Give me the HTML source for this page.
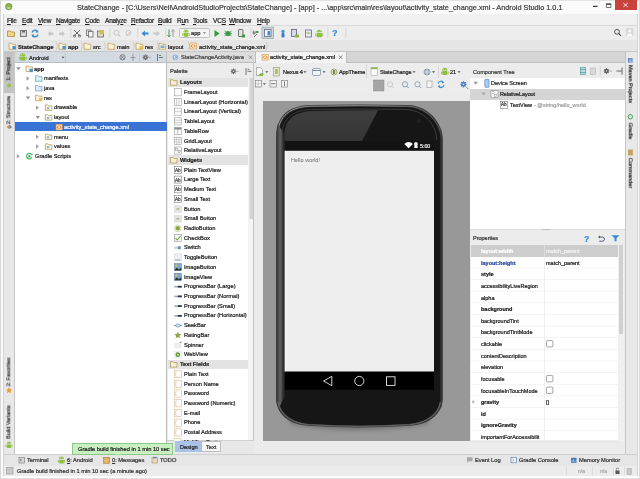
<!DOCTYPE html><html><head><meta charset="utf-8"><style>
html,body{margin:0;padding:0;width:640px;height:479px;overflow:hidden;background:#fff}
body{filter:blur(0.25px)}
body>div{position:absolute}
.t{white-space:nowrap;font-family:"Liberation Sans",sans-serif;-webkit-text-stroke-width:0.22px;will-change:transform}
svg{position:absolute;left:0;top:0}
u{text-decoration-thickness:0.5px;text-underline-offset:0.6px}
</style></head><body>
<div style="left:0px;top:0px;width:640px;height:479px;background:#ffffff"></div>
<div style="left:0px;top:0px;width:640px;height:14px;background:#fbfbfb"></div>
<div style="left:0px;top:0px;width:640px;height:0.8px;background:#e2e2e2"></div>
<div style="left:0px;top:0px;width:1.2px;height:479px;background:#dcdcdc"></div>
<div style="left:615px;top:0px;width:21.5px;height:9.8px;background:#c9423c"></div>
<div style="left:0px;top:14px;width:640px;height:12px;background:#f0f0f0"></div>
<div style="left:0px;top:25px;width:640px;height:1px;background:#d9d9d9"></div>
<div style="left:0px;top:26px;width:640px;height:14px;background:#ededed"></div>
<div style="left:0px;top:39.5px;width:640px;height:1px;background:#d0d0d0"></div>
<div style="left:0px;top:40px;width:640px;height:11.5px;background:#e5e5e5"></div>
<div style="left:0px;top:51px;width:640px;height:1px;background:#c6c6c6"></div>
<div style="left:0px;top:52px;width:15px;height:403px;background:#e8e8e8"></div>
<div style="left:0px;top:52px;width:3px;height:427px;background:#f6f6f6"></div>
<div style="left:14.2px;top:52px;width:0.8px;height:403px;background:#c6c6c6"></div>
<div style="left:4px;top:51.5px;width:10px;height:41px;background:#c4c4c4"></div>
<div style="left:15px;top:52px;width:152px;height:10.5px;background:#d4dae2"></div>
<div style="left:15px;top:62.3px;width:152px;height:0.8px;background:#bcc0c6"></div>
<div style="left:15px;top:63px;width:151.5px;height:392px;background:#ffffff"></div>
<div style="left:166.3px;top:52px;width:1px;height:403px;background:#bdbdbd"></div>
<div style="left:15px;top:121.8px;width:151.5px;height:9.4px;background:#3a73d6"></div>
<div style="left:167.3px;top:52px;width:457.5px;height:10.5px;background:#d5d5d5"></div>
<div style="left:167.3px;top:62.3px;width:457.5px;height:0.8px;background:#bdbdbd"></div>
<div style="left:167.3px;top:52px;width:88px;height:10.3px;background:#dcdcdc"></div>
<div style="left:255px;top:52px;width:0.8px;height:10.5px;background:#bdbdbd"></div>
<div style="left:256px;top:51.8px;width:89.5px;height:11.2px;background:#f3f3f3"></div>
<div style="left:345.5px;top:52px;width:0.8px;height:10.5px;background:#bdbdbd"></div>
<div style="left:167.3px;top:63px;width:86px;height:392px;background:#ececec"></div>
<div style="left:168.3px;top:78px;width:80px;height:362px;background:#ffffff"></div>
<div style="left:248.3px;top:78px;width:4.7px;height:362px;background:#f4f4f4"></div>
<div style="left:248.8px;top:78px;width:4px;height:140.6px;background:#d3d3d3;border-left:0.6px solid #e4e4e4;box-sizing:border-box"></div>
<div style="left:252.8px;top:63px;width:1px;height:377.5px;background:#c4c4c4"></div>
<div style="left:168.3px;top:77.7px;width:80px;height:9.4px;background:#e3e3e3"></div>
<div style="left:168.3px;top:155.45999999999998px;width:80px;height:9.4px;background:#e3e3e3"></div>
<div style="left:168.3px;top:359.58px;width:80px;height:9.4px;background:#e3e3e3"></div>
<div style="left:167.3px;top:440.5px;width:302.2px;height:14px;background:#e8e8e8"></div>
<div style="left:167.3px;top:440.3px;width:95.2px;height:0.8px;background:#cfcfcf"></div>
<div style="left:175px;top:440.8px;width:26.3px;height:11.7px;background:#a9c2e6"></div>
<div style="left:201.3px;top:440.8px;width:20px;height:11.7px;background:#f8f8f8;border:0.8px solid #bdbdbd;box-sizing:border-box"></div>
<div style="left:253.8px;top:63px;width:216px;height:30.7px;background:#ececec"></div>
<div style="left:253.8px;top:93.5px;width:216px;height:0.8px;background:#d2d2d2"></div>
<div style="left:253.8px;top:94.3px;width:216px;height:360.7px;background:#ebebeb"></div>
<div style="left:262.5px;top:100.7px;width:207px;height:340.1px;background:#989898"></div>
<div style="left:469.5px;top:63px;width:155.5px;height:165.5px;background:#ffffff"></div>
<div style="left:469.5px;top:63px;width:155.5px;height:15px;background:#ececec"></div>
<div style="left:469.5px;top:88.6px;width:155.5px;height:11px;background:#d5d5d5"></div>
<div style="left:469.5px;top:228.5px;width:155.5px;height:226.5px;background:#ececec"></div>
<div style="left:469.5px;top:228.5px;width:155.5px;height:0.8px;background:#dcdcdc"></div>
<div style="left:471px;top:244.8px;width:147.3px;height:196.2px;background:#ffffff"></div>
<div style="left:618.3px;top:244.8px;width:5.5px;height:196.2px;background:#f0f0f0"></div>
<div style="left:619.3px;top:245px;width:4.2px;height:88.5px;background:#d0d0d0"></div>
<div style="left:471px;top:244.885px;width:147.3px;height:11.63px;background:#cdcdcd"></div>
<div style="left:625px;top:52px;width:15px;height:403px;background:#e8e8e8"></div>
<div style="left:624.5px;top:52px;width:0.8px;height:403px;background:#c6c6c6"></div>
<div style="left:637px;top:52px;width:3px;height:427px;background:#f6f6f6"></div>
<div style="left:0px;top:454px;width:640px;height:1px;background:#cfcfcf"></div>
<div style="left:0px;top:455px;width:640px;height:11px;background:#e6e6e6"></div>
<div style="left:0px;top:465.7px;width:640px;height:0.6px;background:#d4d4d4"></div>
<div style="left:0px;top:466.3px;width:640px;height:9.7px;background:#ececec"></div>
<div style="left:0px;top:476px;width:640px;height:3px;background:#fcfcfc"></div>
<div style="left:72px;top:443px;width:101px;height:11.8px;background:#c8f0c0;border:0.7px solid #8cc888;box-sizing:border-box"></div>
<div style="left:637px;top:14px;width:3px;height:465px;background:#f9f9f9"></div>
<div style="left:636.6px;top:14px;width:0.6px;height:462px;background:#d4d4d4"></div>
<div style="left:639px;top:0px;width:1px;height:479px;background:#dcdcdc"></div>
<div style="left:0px;top:14px;width:3px;height:465px;background:#f9f9f9"></div>
<div style="left:2.8px;top:14px;width:0.6px;height:462px;background:#d4d4d4"></div>
<div style="left:0px;top:0px;width:1.2px;height:479px;background:#d8d8d8"></div>
<div style="left:0px;top:478px;width:640px;height:1px;background:#e0e0e0"></div>
<svg width="640" height="479" viewBox="0 0 640 479" style="position:absolute;left:0;top:0">
<circle cx="8.75" cy="6.6" r="3.2" fill="#8db34e" stroke="#6f8f3c" stroke-width="0.8"/><path d="M6.5 7.6 a2.4 1.6 0 0 0 4.5 0" fill="#e4efc8"/>
<rect x="593" y="5.8" width="4.5" height="1.2" fill="#333"/>
<rect x="606.3" y="3.8" width="4.6" height="3.8" fill="none" stroke="#444" stroke-width="0.7"/><rect x="606.3" y="3.8" width="4.6" height="1.1" fill="#444"/>
<path d="M623.3 3 L627.8 7 M627.8 3 L623.3 7" stroke="#fbe0e0" stroke-width="1"/>
<path d="M7.5 31 h2.5 l1 1 h3.5 v4.5 h-7z" fill="#f2d68c" stroke="#b08a3c" stroke-width="0.8"/>
<rect x="20.5" y="30.5" width="6" height="6" fill="#d8d8d8" stroke="#6d6d6d" stroke-width="0.9"/><rect x="22" y="30.5" width="3" height="2" fill="#6d6d6d"/>
<path d="M32 32.5 a3.2 3.2 0 0 1 5.8 -0.8 M38 34.5 a3.2 3.2 0 0 1 -5.8 0.8" fill="none" stroke="#3f8bd0" stroke-width="1.5"/><path d="M36.5 29.8 l2.2 2.4 l-2.8 0.5z M33.5 37.2 l-2.2 -2.4 l2.8 -0.5z" fill="#3f8bd0"/>
<path d="M47.5 33.5 l3 -2.5 v1.5 h3 v2.5 h-3 v1.5z" fill="#c9c9c9"/>
<path d="M65 33.5 l-3 -2.5 v1.5 h-3 v2.5 h3 v1.5z" fill="#c9c9c9"/>
<rect x="70.5" y="28" width="0.8" height="10" fill="#cfcfcf"/>
<rect x="109.5" y="28" width="0.8" height="10" fill="#cfcfcf"/>
<rect x="137.5" y="28" width="0.8" height="10" fill="#cfcfcf"/>
<rect x="165.5" y="28" width="0.8" height="10" fill="#cfcfcf"/>
<rect x="250.5" y="28" width="0.8" height="10" fill="#cfcfcf"/>
<rect x="327.5" y="28" width="0.8" height="10" fill="#cfcfcf"/>
<rect x="345.5" y="28" width="0.8" height="10" fill="#cfcfcf"/>
<path d="M74 30 l6 6 M80 30 l-6 6" stroke="#6a6a6a" stroke-width="1"/><circle cx="74.5" cy="36" r="1.2" fill="none" stroke="#6a6a6a" stroke-width="0.8"/><circle cx="79.5" cy="36" r="1.2" fill="none" stroke="#6a6a6a" stroke-width="0.8"/>
<rect x="86.5" y="30" width="4.5" height="5.5" fill="#e8e8e8" stroke="#6a6a6a" stroke-width="0.8"/><rect x="88.5" y="31.5" width="4.5" height="5.5" fill="#f4f4f4" stroke="#6a6a6a" stroke-width="0.8"/>
<rect x="97.5" y="31" width="6" height="6" fill="#e0d8c8" stroke="#6a6a6a" stroke-width="0.8"/><rect x="99.5" y="30" width="4.5" height="4" fill="#c8c050"/>
<circle cx="116.5" cy="32.8" r="2.5" fill="none" stroke="#c6c6c6" stroke-width="1"/><path d="M118.3 34.6 l2 2" stroke="#c6c6c6" stroke-width="1.2"/>
<circle cx="128.5" cy="32.8" r="2.5" fill="none" stroke="#c6c6c6" stroke-width="1"/><path d="M126 36 l5 -5" stroke="#c6c6c6" stroke-width="1"/>
<path d="M141.5 33.5 l3.5 -3 v2 h3.5 v2 h-3.5 v2z" fill="#3a8ad8"/>
<path d="M160 33.5 l-3.5 -3 v2 h-3.5 v2 h3.5 v2z" fill="#c9c9c9"/>
<path d="M169 29.5 v7 M167.5 35 l1.5 2 l1.5 -2" stroke="#4a9a5a" stroke-width="1" fill="none"/><path d="M173 37 v-7 M171.5 31.5 l1.5 -2 l1.5 2" stroke="#9a9a9a" stroke-width="1" fill="none"/>
<rect x="179.5" y="28.5" width="30" height="9" rx="1" fill="#f4f4f4" stroke="#b5b5b5" stroke-width="0.8"/>
<path d="M183.40 32.20 a2.60 2.60 0 0 1 5.21 0z" fill="#97c03c"/><rect x="183.58" y="32.80" width="4.84" height="3.84" rx="0.6" fill="#97c03c"/><rect x="182.28" y="33.00" width="0.9" height="2.88" rx="0.4" fill="#97c03c"/><rect x="188.82" y="33.00" width="0.9" height="2.88" rx="0.4" fill="#97c03c"/><circle cx="184.83" cy="31.03" r="0.45" fill="#fff"/><circle cx="187.17" cy="31.03" r="0.45" fill="#fff"/>
<path d="M203 32.3 l1.5 1.8 l1.5 -1.8z" fill="#777"/>
<path d="M214.5 30 l5 3.5 l-5 3.5z" fill="#2e9a3e"/>
<circle cx="228" cy="33.5" r="2.6" fill="#3a9a4a"/><path d="M224.5 31 l7 5 M231.5 31 l-7 5 M224 33.5 h8" stroke="#3a9a4a" stroke-width="0.8"/>
<rect x="238.5" y="29.5" width="4.5" height="7" rx="0.6" fill="#e0e0e0" stroke="#555" stroke-width="0.8"/><rect x="242" y="34.5" width="3" height="3" fill="#3a9a4a"/>
<path d="M253 30 l3 3 l-2 2 l-1.5 -1.5z" fill="#8a8a8a"/><rect x="255.5" y="31" width="3" height="2" fill="#4aa05a"/><path d="M254 37 l3 -3" stroke="#777" stroke-width="1"/>
<rect x="262" y="27.2" width="11.5" height="11.3" fill="#cfd6de" stroke="#9aa4ae" stroke-width="0.8"/><rect x="264.5" y="29.5" width="6.5" height="7" fill="#f6f6f6" stroke="#5a6a7a" stroke-width="0.8"/><rect x="267.5" y="31" width="2.5" height="4.5" fill="#3a8ad8"/>
<circle cx="283" cy="31.5" r="1.7" fill="#3aa0b0"/><rect x="281.5" y="33" width="3" height="4.5" rx="1" fill="#3a7ac8"/>
<rect x="291.5" y="29.5" width="5" height="7" fill="#d8dce8" stroke="#5a5a8a" stroke-width="0.8"/><rect x="295" y="34.5" width="4" height="3" fill="#8ab83c"/>
<rect x="305.5" y="30" width="6" height="7" fill="#e8e8f0" stroke="#6a6a9a" stroke-width="0.8"/><rect x="306.5" y="32.5" width="4" height="1" fill="#8ab83c"/>
<path d="M316.44 32.36 a2.86 2.86 0 0 1 5.71 0z" fill="#8fbf3c"/><rect x="316.65" y="32.96" width="5.30" height="4.22" rx="0.6" fill="#8fbf3c"/><rect x="315.35" y="33.16" width="0.9" height="3.16" rx="0.4" fill="#8fbf3c"/><rect x="322.35" y="33.16" width="0.9" height="3.16" rx="0.4" fill="#8fbf3c"/><circle cx="318.01" cy="31.07" r="0.45" fill="#fff"/><circle cx="320.59" cy="31.07" r="0.45" fill="#fff"/>
<circle cx="617" cy="31.8" r="2.4" fill="none" stroke="#444" stroke-width="0.9"/><path d="M618.8 33.6 l2.2 2.2" stroke="#444" stroke-width="1.1"/>
<rect x="626" y="28" width="7.5" height="8" fill="#d8d8d8"/><circle cx="629.7" cy="31" r="1.6" fill="#fafafa"/><path d="M627 36 a2.7 2.5 0 0 1 5.4 0z" fill="#fafafa"/>
<path d="M9 43.3 h2.5 l1 1 h3.2 v5 h-6.7z" fill="#f8f0d8" stroke="#b89a50" stroke-width="0.7"/>
<rect x="12.5" y="46" width="3.2" height="3.2" fill="#4a90d0"/>
<path d="M56 41.5 l1.5 4.5 l-1.5 4.5" stroke="#c8c8c8" stroke-width="0.8" fill="none"/>
<path d="M59 43.3 h2.5 l1 1 h3.2 v5 h-6.7z" fill="#f8f0d8" stroke="#b89a50" stroke-width="0.7"/>
<rect x="62.5" y="46" width="3.2" height="3.2" fill="#4a90d0"/>
<path d="M81 41.5 l1.5 4.5 l-1.5 4.5" stroke="#c8c8c8" stroke-width="0.8" fill="none"/>
<path d="M84 43.3 h2.5 l1 1 h3.2 v5 h-6.7z" fill="#f8f0d8" stroke="#b89a50" stroke-width="0.7"/>
<path d="M104 41.5 l1.5 4.5 l-1.5 4.5" stroke="#c8c8c8" stroke-width="0.8" fill="none"/>
<path d="M108 43.3 h2.5 l1 1 h3.2 v5 h-6.7z" fill="#f8f0d8" stroke="#b89a50" stroke-width="0.7"/>
<path d="M133 41.5 l1.5 4.5 l-1.5 4.5" stroke="#c8c8c8" stroke-width="0.8" fill="none"/>
<path d="M136 43.3 h2.5 l1 1 h3.2 v5 h-6.7z" fill="#f8f0d8" stroke="#b89a50" stroke-width="0.7"/>
<rect x="139.5" y="46.2" width="3" height="3" fill="#e8c040"/>
<path d="M157 41.5 l1.5 4.5 l-1.5 4.5" stroke="#c8c8c8" stroke-width="0.8" fill="none"/>
<path d="M159 43.3 h2.5 l1 1 h3.2 v5 h-6.7z" fill="#f8f0d8" stroke="#b89a50" stroke-width="0.7"/>
<rect x="160.5" y="45.5" width="4" height="2.5" fill="#7aaad8"/>
<path d="M188 41.5 l1.5 4.5 l-1.5 4.5" stroke="#c8c8c8" stroke-width="0.8" fill="none"/>
<rect x="190" y="43" width="6.4" height="6" fill="#fbe6c8" stroke="#d0904a" stroke-width="0.6"/><path d="M192.60 44.40 l-1.5 1.6 l1.5 1.6 M193.80 44.40 l1.5 1.6 l-1.5 1.6" fill="none" stroke="#e07818" stroke-width="0.9"/>
<path d="M266 41.5 l1.5 4.5 l-1.5 4.5" stroke="#c8c8c8" stroke-width="0.8" fill="none"/>
<circle cx="9" cy="85.5" r="2" fill="#9ac040"/>
<path d="M6.5 127 l3 -2.2 v4.4z" fill="#d88a30"/><path d="M9.5 124.8 l2.5 2.2 l-2.5 2.2z" fill="#4a7ac0"/>
<path d="M9 387 l1 2.2 l2.3 0.2 l-1.8 1.5 l0.6 2.3 l-2.1 -1.3 l-2.1 1.3 l0.6 -2.3 l-1.8 -1.5 l2.3 -0.2z" fill="#e8a030"/>
<path d="M6.65 443.85 a2.35 2.35 0 0 1 4.70 0z" fill="#8fbf3c"/><rect x="6.82" y="444.45" width="4.37" height="3.47" rx="0.6" fill="#8fbf3c"/><rect x="5.52" y="444.65" width="0.9" height="2.60" rx="0.4" fill="#8fbf3c"/><rect x="11.58" y="444.65" width="0.9" height="2.60" rx="0.4" fill="#8fbf3c"/><circle cx="7.94" cy="442.79" r="0.45" fill="#fff"/><circle cx="10.06" cy="442.79" r="0.45" fill="#fff"/>
<path d="M20.01 55.99 a2.69 2.69 0 0 1 5.38 0z" fill="#8fbf3c"/><rect x="20.20" y="56.59" width="4.99" height="3.97" rx="0.6" fill="#8fbf3c"/><rect x="18.90" y="56.79" width="0.9" height="2.98" rx="0.4" fill="#8fbf3c"/><rect x="25.60" y="56.79" width="0.9" height="2.98" rx="0.4" fill="#8fbf3c"/><circle cx="21.49" cy="54.78" r="0.45" fill="#fff"/><circle cx="23.91" cy="54.78" r="0.45" fill="#fff"/>
<path d="M61.5 56.8 l1.5 1.7 l1.5 -1.7z" fill="#555"/>
<rect x="65" y="53" width="0.8" height="9" fill="#c0c4ca"/>
<circle cx="122.5" cy="57.3" r="2.6" fill="none" stroke="#666" stroke-width="0.8"/><path d="M120.7 55.5 l3.6 3.6 M124.3 55.5 l-3.6 3.6" stroke="#666" stroke-width="0.7"/>
<path d="M133 53.5 v7.5 M130.5 57.5 h5" stroke="#888" stroke-width="0.8"/>
<rect x="139" y="53" width="0.8" height="9" fill="#c0c4ca"/>
<rect x="144.95" y="54.50" width="1.1" height="1.4" fill="#666" transform="rotate(0 145.5 57.3)"/><rect x="144.95" y="54.50" width="1.1" height="1.4" fill="#666" transform="rotate(45 145.5 57.3)"/><rect x="144.95" y="54.50" width="1.1" height="1.4" fill="#666" transform="rotate(90 145.5 57.3)"/><rect x="144.95" y="54.50" width="1.1" height="1.4" fill="#666" transform="rotate(135 145.5 57.3)"/><rect x="144.95" y="54.50" width="1.1" height="1.4" fill="#666" transform="rotate(180 145.5 57.3)"/><rect x="144.95" y="54.50" width="1.1" height="1.4" fill="#666" transform="rotate(225 145.5 57.3)"/><rect x="144.95" y="54.50" width="1.1" height="1.4" fill="#666" transform="rotate(270 145.5 57.3)"/><rect x="144.95" y="54.50" width="1.1" height="1.4" fill="#666" transform="rotate(315 145.5 57.3)"/><circle cx="145.5" cy="57.3" r="1.9" fill="#666"/><circle cx="145.5" cy="57.3" r="0.76" fill="#d4dae2"/>
<path d="M149.3 57.3 h1.5" stroke="#666" stroke-width="0.6"/>
<path d="M157.5 54 v7 M159 57.5 h4 M159 55.5 h2" stroke="#555" stroke-width="0.8"/>
<path d="M16.3 67.3 h4.4 l-2.2 3z" fill="#909090"/>
<path d="M26 66.05 h2.4 l0.8 0.9 h3.3 v4.6 h-6.5z" fill="#f8f1dc" stroke="#b39650" stroke-width="0.7"/>
<rect x="29.5" y="68.8" width="3.3" height="3.3" fill="#4a90d0"/>
<path d="M26.5 76.32 l3 2.2 l-3 2.2z" fill="#a0a0a0"/>
<path d="M35.5 75.77 h2.4 l0.8 0.9 h3.3 v4.6 h-6.5z" fill="#dff0f4" stroke="#5aa0b8" stroke-width="0.7"/>
<path d="M26.5 86.03999999999999 l3 2.2 l-3 2.2z" fill="#a0a0a0"/>
<path d="M35.5 85.49 h2.4 l0.8 0.9 h3.3 v4.6 h-6.5z" fill="#dde9f6" stroke="#6a9ac8" stroke-width="0.7"/>
<path d="M25.8 96.46000000000001 h4.4 l-2.2 3z" fill="#909090"/>
<path d="M35.5 95.21000000000001 h2.4 l0.8 0.9 h3.3 v4.6 h-6.5z" fill="#f8f1dc" stroke="#b39650" stroke-width="0.7"/>
<rect x="39" y="97.96000000000001" width="3" height="3" fill="#e8c040"/>
<path d="M36 105.48 l3 2.2 l-3 2.2z" fill="#a0a0a0"/>
<path d="M45.3 104.93 h2.4 l0.8 0.9 h3.3 v4.6 h-6.5z" fill="#fbf6e8" stroke="#a8924a" stroke-width="0.7"/>
<rect x="46.8" y="107.18" width="2.5" height="2" fill="#8ab0d0"/>
<path d="M35.6 115.9 h4.4 l-2.2 3z" fill="#909090"/>
<path d="M45.3 114.65 h2.4 l0.8 0.9 h3.3 v4.6 h-6.5z" fill="#fbf6e8" stroke="#a8924a" stroke-width="0.7"/>
<rect x="46.8" y="116.9" width="2.5" height="2" fill="#8ab0d0"/>
<path d="M36 134.64000000000001 l3 2.2 l-3 2.2z" fill="#a0a0a0"/>
<path d="M45.3 134.09 h2.4 l0.8 0.9 h3.3 v4.6 h-6.5z" fill="#fbf6e8" stroke="#a8924a" stroke-width="0.7"/>
<rect x="46.8" y="136.34" width="2.5" height="2" fill="#8ab0d0"/>
<path d="M36 144.36 l3 2.2 l-3 2.2z" fill="#a0a0a0"/>
<path d="M45.3 143.81 h2.4 l0.8 0.9 h3.3 v4.6 h-6.5z" fill="#fbf6e8" stroke="#a8924a" stroke-width="0.7"/>
<rect x="46.8" y="146.06" width="2.5" height="2" fill="#8ab0d0"/>
<rect x="56" y="124.22" width="6.2" height="5.8" fill="#f6d8a8" stroke="#d0904a" stroke-width="0.6"/><path d="M58.60 125.62 l-1.5 1.6 l1.5 1.6 M59.60 125.62 l1.5 1.6 l-1.5 1.6" fill="none" stroke="#e07818" stroke-width="0.9"/>
<path d="M16.8 154.08 l3 2.2 l-3 2.2z" fill="#a0a0a0"/>
<path d="M31.6 154.68 A2.7 2.7 0 1 0 31.8 157.28" fill="none" stroke="#4cc068" stroke-width="1.3"/><circle cx="29.4" cy="156.28" r="1.1" fill="#1e8a4a"/><path d="M30.8 153.28 l2.2 0.6 l-1.2 1.8z" fill="#4cc068"/>
<circle cx="175.3" cy="57.3" r="2.7" fill="#7ab0e0"/><path d="M176.5 56 a1.5 1.5 0 1 0 0 2.6" stroke="#fff" stroke-width="0.8" fill="none"/>
<path d="M249 55.5 l3.2 3.4 M252.2 55.5 l-3.2 3.4" stroke="#777" stroke-width="0.7"/>
<rect x="262" y="54.3" width="6.2" height="5.8" fill="#fbe6c8" stroke="#d0904a" stroke-width="0.6"/><path d="M264.60 55.70 l-1.5 1.6 l1.5 1.6 M265.60 55.70 l1.5 1.6 l-1.5 1.6" fill="none" stroke="#e07818" stroke-width="0.9"/>
<path d="M339 55.5 l3.2 3.4 M342.2 55.5 l-3.2 3.4" stroke="#555" stroke-width="0.7"/>
<rect x="232.95" y="68.50" width="1.1" height="1.4" fill="#666" transform="rotate(0 233.5 71.3)"/><rect x="232.95" y="68.50" width="1.1" height="1.4" fill="#666" transform="rotate(45 233.5 71.3)"/><rect x="232.95" y="68.50" width="1.1" height="1.4" fill="#666" transform="rotate(90 233.5 71.3)"/><rect x="232.95" y="68.50" width="1.1" height="1.4" fill="#666" transform="rotate(135 233.5 71.3)"/><rect x="232.95" y="68.50" width="1.1" height="1.4" fill="#666" transform="rotate(180 233.5 71.3)"/><rect x="232.95" y="68.50" width="1.1" height="1.4" fill="#666" transform="rotate(225 233.5 71.3)"/><rect x="232.95" y="68.50" width="1.1" height="1.4" fill="#666" transform="rotate(270 233.5 71.3)"/><rect x="232.95" y="68.50" width="1.1" height="1.4" fill="#666" transform="rotate(315 233.5 71.3)"/><circle cx="233.5" cy="71.3" r="1.9" fill="#666"/><circle cx="233.5" cy="71.3" r="0.76" fill="#ececec"/>
<path d="M237.2 71.3 h1.4" stroke="#666" stroke-width="0.6"/>
<path d="M246 68 v7 M247.5 71.3 h4 M247.5 69.3 h2" stroke="#555" stroke-width="0.8"/>
<path d="M170.5 79.75 h2.4 l0.8 0.9 h3.3 v4.6 h-6.5z" fill="#f6eed6" stroke="#a8924a" stroke-width="0.7"/>
<rect x="174.3" y="88.62" width="7" height="7.2" fill="#fafafa" stroke="#a0a0a0" stroke-width="0.6"/>
<rect x="174.3" y="98.34" width="7" height="7.2" fill="#fafafa" stroke="#a0a0a0" stroke-width="0.6"/>
<path d="M176.60000000000002 98.34 v7.2 M179.0 98.34 v7.2" stroke="#a0a0a0" stroke-width="0.5"/>
<rect x="174.3" y="108.06" width="7" height="7.2" fill="#fafafa" stroke="#a0a0a0" stroke-width="0.6"/>
<path d="M174.3 111.66 h7" stroke="#a0a0a0" stroke-width="0.5"/>
<rect x="174.3" y="117.78" width="7" height="7.2" fill="#fafafa" stroke="#a0a0a0" stroke-width="0.6"/>
<path d="M174.3 120.18 h7 M174.3 122.58 h7" stroke="#a0a0a0" stroke-width="0.5"/>
<rect x="174.3" y="127.5" width="7" height="7.2" fill="#fafafa" stroke="#a0a0a0" stroke-width="0.6"/>
<rect x="174.3" y="127.5" width="7" height="2" fill="#8a8a8a"/><path d="M177.8 127.5 v7.2" stroke="#8a8a8a" stroke-width="0.5"/>
<rect x="174.3" y="137.22" width="7" height="7.2" fill="#fafafa" stroke="#a0a0a0" stroke-width="0.6"/>
<path d="M174.3 139.62 h7 M174.3 142.02 h7 M176.60000000000002 137.22 v7.2 M179.0 137.22 v7.2" stroke="#9a9a9a" stroke-width="0.4"/>
<rect x="174.3" y="146.94000000000003" width="7" height="7.2" fill="#fafafa" stroke="#a0a0a0" stroke-width="0.6"/>
<rect x="175.5" y="148.14000000000001" width="2" height="2" fill="none" stroke="#777" stroke-width="0.5"/><rect x="178.10000000000002" y="150.74000000000004" width="2" height="2" fill="none" stroke="#777" stroke-width="0.5"/>
<path d="M170.5 157.51 h2.4 l0.8 0.9 h3.3 v4.6 h-6.5z" fill="#f6eed6" stroke="#a8924a" stroke-width="0.7"/>
<rect x="174.3" y="166.38000000000002" width="7" height="7" fill="#fff" stroke="#7a7a7a" stroke-width="0.6"/>
<rect x="174.3" y="176.1" width="7" height="7" fill="#fff" stroke="#7a7a7a" stroke-width="0.6"/>
<rect x="174.3" y="185.82000000000002" width="7" height="7" fill="#fff" stroke="#7a7a7a" stroke-width="0.6"/>
<rect x="174.3" y="195.54000000000002" width="7" height="7" fill="#fff" stroke="#7a7a7a" stroke-width="0.6"/>
<rect x="174.3" y="205.76000000000002" width="7" height="6.5" fill="#e4e4e4" stroke="#cfcfcf" stroke-width="0.5"/><rect x="176.3" y="208.26000000000002" width="3" height="1.4" fill="#a8b880"/>
<rect x="174.3" y="215.48000000000002" width="7" height="6.5" fill="#e4e4e4" stroke="#cfcfcf" stroke-width="0.5"/><rect x="176.3" y="217.98000000000002" width="3" height="1.4" fill="#a8b880"/>
<circle cx="177.8" cy="228.3" r="3.3" fill="#fff" stroke="#a8b880" stroke-width="0.6"/><circle cx="177.8" cy="228.3" r="2.2" fill="#8aa83a"/>
<rect x="174.3" y="234.42000000000002" width="7" height="7" fill="#f4f4f4" stroke="#9a9a9a" stroke-width="0.6"/><path d="M175.5 238.02 l1.8 2 l3.2 -4" stroke="#7aa030" stroke-width="1.1" fill="none"/>
<rect x="174.3" y="246.54000000000002" width="7" height="2.4" fill="#c8d4e0"/><rect x="177.9" y="246.24" width="2.6" height="3" fill="#6a8ab0"/>
<rect x="174.3" y="253.86000000000004" width="7" height="7" fill="#f0f0f0" stroke="#d0d0d0" stroke-width="0.5"/><rect x="175.3" y="259.46000000000004" width="5" height="1" fill="#8aa0c0"/>
<rect x="174.3" y="263.58" width="7" height="7" fill="#7aa8d0" stroke="#5a7a9a" stroke-width="0.5"/><path d="M174.3 270.58 l2.5 -3 l2 2 l2.5 -2 v3z" fill="#2a3a2a"/><circle cx="176.3" cy="265.78" r="1" fill="#e8d060"/>
<rect x="174.3" y="273.29999999999995" width="7" height="7" fill="#7aa8d0" stroke="#5a7a9a" stroke-width="0.5"/><path d="M174.3 280.29999999999995 l2.5 -3 l2 2 l2.5 -2 v3z" fill="#2a3a2a"/><circle cx="176.3" cy="275.49999999999994" r="1" fill="#e8d060"/>
<rect x="174.3" y="285.92" width="7.5" height="1.5" fill="#8aa8c8"/><rect x="177.8" y="285.82" width="4" height="1.7" fill="#333"/>
<rect x="174.3" y="295.64000000000004" width="7.5" height="1.5" fill="#8aa8c8"/><rect x="177.8" y="295.54" width="4" height="1.7" fill="#333"/>
<rect x="174.3" y="305.36" width="7.5" height="1.5" fill="#8aa8c8"/><rect x="177.8" y="305.26" width="4" height="1.7" fill="#333"/>
<rect x="174.3" y="315.08000000000004" width="7.5" height="1.5" fill="#8aa8c8"/><rect x="177.8" y="314.98" width="4" height="1.7" fill="#333"/>
<rect x="174.3" y="324.9" width="7.5" height="1.2" fill="#5a8ac0"/><ellipse cx="178.10000000000002" cy="325.5" rx="2.3" ry="1.6" fill="#cfe0f0" stroke="#5a8ac0" stroke-width="0.6"/>
<path d="M177.8 331.62 l1 2.4 l2.6 0.2 l-2 1.7 l0.7 2.6 l-2.3 -1.4 l-2.3 1.4 l0.7 -2.6 l-2 -1.7 l2.6 -0.2z" fill="#8aa840"/>
<rect x="174.3" y="342.84" width="7" height="5.5" fill="#eeeeee"/><path d="M179.3 342.34 l2 -1 v2z" fill="#6a8ab0"/>
<rect x="174.3" y="351.06" width="7" height="7" fill="#f6f6f6" stroke="#e0e0e0" stroke-width="0.5"/><circle cx="177.8" cy="354.66" r="2.3" fill="#5a9a2a"/><circle cx="177.8" cy="354.66" r="0.9" fill="#e8f0d8"/>
<path d="M170.5 361.63 h2.4 l0.8 0.9 h3.3 v4.6 h-6.5z" fill="#f6eed6" stroke="#a8924a" stroke-width="0.7"/>
<rect x="174.3" y="370.5" width="7" height="7.2" fill="#fff" stroke="#d8b890" stroke-width="0.6"/><path d="M176.70000000000002 371.7 q-1 0 -1 1 v3 q0 1 1 1" stroke="#c8a878" stroke-width="0.5" fill="none"/>
<rect x="174.3" y="380.21999999999997" width="7" height="7.2" fill="#fff" stroke="#d8b890" stroke-width="0.6"/><path d="M176.70000000000002 381.41999999999996 q-1 0 -1 1 v3 q0 1 1 1" stroke="#c8a878" stroke-width="0.5" fill="none"/>
<rect x="174.3" y="389.94" width="7" height="7.2" fill="#fff" stroke="#d8b890" stroke-width="0.6"/><path d="M176.70000000000002 391.14 q-1 0 -1 1 v3 q0 1 1 1" stroke="#c8a878" stroke-width="0.5" fill="none"/>
<rect x="174.3" y="399.66" width="7" height="7.2" fill="#fff" stroke="#d8b890" stroke-width="0.6"/><path d="M176.70000000000002 400.86 q-1 0 -1 1 v3 q0 1 1 1" stroke="#c8a878" stroke-width="0.5" fill="none"/>
<rect x="174.3" y="409.38" width="7" height="7.2" fill="#fff" stroke="#d8b890" stroke-width="0.6"/><path d="M176.70000000000002 410.58 q-1 0 -1 1 v3 q0 1 1 1" stroke="#c8a878" stroke-width="0.5" fill="none"/>
<rect x="174.3" y="419.1" width="7" height="7.2" fill="#fff" stroke="#d8b890" stroke-width="0.6"/><path d="M176.70000000000002 420.3 q-1 0 -1 1 v3 q0 1 1 1" stroke="#c8a878" stroke-width="0.5" fill="none"/>
<rect x="174.3" y="428.82" width="7" height="7.2" fill="#fff" stroke="#d8b890" stroke-width="0.6"/><path d="M176.70000000000002 430.02 q-1 0 -1 1 v3 q0 1 1 1" stroke="#c8a878" stroke-width="0.5" fill="none"/>
<path d="M256.5 67.5 h4 l2 2 v6 h-6z" fill="#f6f6f6" stroke="#8a8a8a" stroke-width="0.6"/><path d="M258 76 q2 -4 5.5 -2.5 l-0.5 2.5z" fill="#8ab83c"/>
<path d="M265.3 71.3 l1.5 1.7 l1.5 -1.7z" fill="#555"/>
<rect x="273.5" y="67.5" width="6" height="8.5" fill="#e8e8d8" stroke="#8a9a5a" stroke-width="0.6"/><rect x="275" y="69" width="3" height="5" fill="#a8c060"/>
<path d="M303.5 71.3 l1.5 1.7 l1.5 -1.7z" fill="#555"/>
<rect x="312.5" y="68.5" width="8" height="7" rx="1.5" fill="#f4f4f4" stroke="#6a7a9a" stroke-width="0.6"/><path d="M312.5 70.5 h8" stroke="#6a8ab8" stroke-width="1"/>
<path d="M322.5 71.3 l1.5 1.7 l1.5 -1.7z" fill="#555"/>
<circle cx="334" cy="72" r="3" fill="#d8e4a0" stroke="#7a8a3a" stroke-width="0.6"/><rect x="333.3" y="70" width="1.4" height="4" fill="#556"/>
<rect x="366" y="64" width="0.8" height="14" fill="#d4d4d4"/>
<rect x="371" y="67.5" width="6.5" height="8" fill="#f8f8f8" stroke="#9a9a9a" stroke-width="0.5"/><rect x="371" y="67.5" width="6.5" height="1.6" fill="#8ab83c"/>
<path d="M412.5 71.3 l1.5 1.7 l1.5 -1.7z" fill="#555"/>
<circle cx="427" cy="72" r="3" fill="#a8b8d0" stroke="#6a7a9a" stroke-width="0.6"/><path d="M424 72 h6 M427 69 v6" stroke="#e8eef4" stroke-width="0.5"/>
<path d="M432 71.3 l1.5 1.7 l1.5 -1.7z" fill="#555"/>
<rect x="438" y="66" width="0.8" height="12" fill="#d4d4d4"/>
<path d="M442.11 70.49 a2.69 2.69 0 0 1 5.38 0z" fill="#8fbf3c"/><rect x="442.30" y="71.09" width="4.99" height="3.97" rx="0.6" fill="#8fbf3c"/><rect x="441.00" y="71.29" width="0.9" height="2.98" rx="0.4" fill="#8fbf3c"/><rect x="447.70" y="71.29" width="0.9" height="2.98" rx="0.4" fill="#8fbf3c"/><circle cx="443.59" cy="69.28" r="0.45" fill="#fff"/><circle cx="446.01" cy="69.28" r="0.45" fill="#fff"/>
<path d="M457.5 71.3 l1.5 1.7 l1.5 -1.7z" fill="#555"/>
<rect x="255.3" y="80.5" width="6" height="6.5" fill="#f4f4f4" stroke="#777" stroke-width="0.6"/><path d="M255.3 83.7 h6 M258.3 80.5 v6.5" stroke="#999" stroke-width="0.4"/>
<path d="M262.8 83.3 l1.5 1.7 l1.5 -1.7z" fill="#555"/>
<rect x="270" y="80.5" width="6.5" height="6.5" fill="#f4f4f4" stroke="#777" stroke-width="0.6"/><path d="M271 83.7 h4.5" stroke="#555" stroke-width="0.8"/>
<rect x="281.5" y="80.5" width="6" height="6.5" fill="#f4f4f4" stroke="#777" stroke-width="0.6"/><path d="M284.5 81.5 v4.5" stroke="#555" stroke-width="0.8"/>
<rect x="373.5" y="80" width="10.5" height="11" fill="#a5a5a5" stroke="#8a8a8a" stroke-width="0.5"/>
<circle cx="390" cy="84.3" r="2.6" fill="none" stroke="#c4c4c4" stroke-width="0.9"/><path d="M391.9 86.2 l1.8 1.8" stroke="#c4c4c4" stroke-width="1"/>
<circle cx="405" cy="84.3" r="2.6" fill="none" stroke="#7a9ab8" stroke-width="0.9"/><path d="M406.9 86.2 l1.8 1.8" stroke="#7a9ab8" stroke-width="1"/>
<circle cx="417.5" cy="84.3" r="2.6" fill="none" stroke="#8aa0b8" stroke-width="0.9"/><path d="M419.4 86.2 l1.8 1.8" stroke="#8aa0b8" stroke-width="1"/>
<rect x="427" y="81" width="5" height="6.5" fill="#f4f4f4" stroke="#9a9a9a" stroke-width="0.6"/>
<path d="M438 83.5 a3 3 0 0 1 5.4 -1 M444 85.2 a3 3 0 0 1 -5.4 1" fill="none" stroke="#3a8ad8" stroke-width="1.2"/><path d="M442.3 80.8 l1.9 2.1 l-2.5 0.4z M439.7 87.8 l-1.9 -2.1 l2.5 -0.4z" fill="#3a8ad8"/>
<rect x="462.95" y="81.20" width="1.1" height="1.4" fill="#3a7ac8" transform="rotate(0 463.5 84.3)"/><rect x="462.95" y="81.20" width="1.1" height="1.4" fill="#3a7ac8" transform="rotate(45 463.5 84.3)"/><rect x="462.95" y="81.20" width="1.1" height="1.4" fill="#3a7ac8" transform="rotate(90 463.5 84.3)"/><rect x="462.95" y="81.20" width="1.1" height="1.4" fill="#3a7ac8" transform="rotate(135 463.5 84.3)"/><rect x="462.95" y="81.20" width="1.1" height="1.4" fill="#3a7ac8" transform="rotate(180 463.5 84.3)"/><rect x="462.95" y="81.20" width="1.1" height="1.4" fill="#3a7ac8" transform="rotate(225 463.5 84.3)"/><rect x="462.95" y="81.20" width="1.1" height="1.4" fill="#3a7ac8" transform="rotate(270 463.5 84.3)"/><rect x="462.95" y="81.20" width="1.1" height="1.4" fill="#3a7ac8" transform="rotate(315 463.5 84.3)"/><circle cx="463.5" cy="84.3" r="2.2" fill="#3a7ac8"/><circle cx="463.5" cy="84.3" r="0.88" fill="#ececec"/>
<path d="M466.5 87.3 l1.5 1.5" stroke="#333" stroke-width="0.7"/>
<defs>
<linearGradient id="lside" x1="0" y1="0" x2="1" y2="0"><stop offset="0" stop-color="#383838"/><stop offset="0.22" stop-color="#444"/><stop offset="0.45" stop-color="#626262"/><stop offset="0.62" stop-color="#4e4e4e"/><stop offset="0.8" stop-color="#303030"/><stop offset="1" stop-color="#262626"/></linearGradient>
<linearGradient id="rim" x1="0" y1="0" x2="1" y2="0"><stop offset="0" stop-color="#a8a8a8"/><stop offset="0.6" stop-color="#9a9a9a"/><stop offset="1" stop-color="#5a5a5a"/></linearGradient>
<linearGradient id="topface" x1="0" y1="0" x2="0" y2="1"><stop offset="0" stop-color="#3e3e3e"/><stop offset="1" stop-color="#353535"/></linearGradient>
</defs>
<defs><filter id="blur" x="-20%" y="-50%" width="140%" height="200%"><feGaussianBlur stdDeviation="2.2"/></filter></defs><path d="M290 418 Q359 432 428 418 L428 424 Q359 436 290 424 Z" fill="#555" opacity="0.55" filter="url(#blur)"/>
<path d="M276.1 140 C276.1 117 286 106.2 310 105.1 Q359 104.0 408 105.1 C428 105.9 442.6 122 442.6 140 L442.6 398 C442.6 412 432 424.2 410 425.8 Q359 429.3 308 425.8 C286 424.2 276.1 412 276.1 398 Z" fill="#333"/>
<path d="M277.2 140 C277.2 118 287 107.3 310 106.2 Q359 105.1 408 106.2 C427 107 441.5 123 441.5 140" fill="none" stroke="url(#rim)" stroke-width="0.85"/>
<path d="M278.3 140 C278.3 119 288 108.5 310 107.3 Q359 106.3 408 107.3 C426 108.3 440.6 124 440.6 140 L440.6 398 C440.6 411 431 422.2 410 423.8 Q359 427.3 308 423.8 C287 422.2 278.3 411 278.3 398 Z" fill="#161616"/>
<path d="M281.5 138 C281.8 120 290 110.6 311 109.5 Q359 108.6 407 109.5 C424 110.4 436.5 125 436.8 140" fill="none" stroke="#4a4a4a" stroke-width="0.7"/>
<path d="M284.2 141 L284.2 136 C284.5 121 292 112 312 111 Q345 110.3 378 110.3 L362 141 Z" fill="url(#topface)"/>
<path d="M276.1 140 C276.1 133 276.6 128 277.6 124 L284.8 134 L284.8 396 L279 408 C277 404 276.1 401 276.1 398 Z" fill="url(#lside)"/>
<path d="M440.6 128 C441.8 131 442.6 135 442.6 140 L442.6 398 C442.6 402 441.8 406 440.6 410 Z" fill="#3a3a3a"/>
<circle cx="419" cy="121" r="2.3" fill="#242424" opacity="0.8"/>
<rect x="284.8" y="141" width="149.2" height="9.8" fill="#131313"/>
<rect x="284.8" y="150.8" width="149.2" height="221" fill="#eeeeee"/>
<rect x="284.8" y="150.8" width="1" height="221" fill="#f8f8f8"/>
<rect x="284.8" y="371.6" width="149.2" height="18.2" fill="#000"/>
<path d="M278.4 402 C279.5 413 290 422.8 308 424.6 Q359 428.2 410 424.6 C428 422.8 439 413 440.3 402" fill="none" stroke="#626262" stroke-width="1.4"/>
<path d="M408.6 148.2 L404.3 143.9 A6 6 0 0 1 412.9 143.9 Z" fill="#fff"/>
<rect x="414.3" y="142.6" width="3.3" height="5.4" fill="#fff"/><rect x="415.2" y="142" width="1.5" height="0.8" fill="#fff"/>
<path d="M323.6 381 L331.8 376.3 L331.8 385.7 Z" fill="none" stroke="#e8e8e8" stroke-width="0.9"/>
<circle cx="359.3" cy="381" r="4.6" fill="none" stroke="#e8e8e8" stroke-width="0.9"/>
<rect x="386.5" y="376.8" width="8.5" height="8.6" fill="none" stroke="#e8e8e8" stroke-width="0.9"/>
<rect x="580.5" y="67.5" width="5" height="7" fill="#b8dce0" stroke="#3a9aa0" stroke-width="0.6"/><path d="M580.5 69.5 h5 M580.5 72.5 h5" stroke="#2a7a80" stroke-width="0.5"/>
<rect x="590.5" y="68" width="5" height="6.5" fill="#d8d8d8" stroke="#aaa" stroke-width="0.5"/>
<rect x="599.8" y="66" width="0.8" height="10" fill="#d0d0d0"/>
<rect x="605.95" y="68.20" width="1.1" height="1.4" fill="#555" transform="rotate(0 606.5 71)"/><rect x="605.95" y="68.20" width="1.1" height="1.4" fill="#555" transform="rotate(45 606.5 71)"/><rect x="605.95" y="68.20" width="1.1" height="1.4" fill="#555" transform="rotate(90 606.5 71)"/><rect x="605.95" y="68.20" width="1.1" height="1.4" fill="#555" transform="rotate(135 606.5 71)"/><rect x="605.95" y="68.20" width="1.1" height="1.4" fill="#555" transform="rotate(180 606.5 71)"/><rect x="605.95" y="68.20" width="1.1" height="1.4" fill="#555" transform="rotate(225 606.5 71)"/><rect x="605.95" y="68.20" width="1.1" height="1.4" fill="#555" transform="rotate(270 606.5 71)"/><rect x="605.95" y="68.20" width="1.1" height="1.4" fill="#555" transform="rotate(315 606.5 71)"/><circle cx="606.5" cy="71" r="1.9" fill="#555"/><circle cx="606.5" cy="71" r="0.76" fill="#ececec"/>
<path d="M610.2 71 h1.4" stroke="#666" stroke-width="0.6"/>
<path d="M622 67.5 v7 M616.5 71 h5" stroke="#555" stroke-width="0.9"/>
<path d="M473.5 81.8 h4.4 l-2.2 3z" fill="#999"/>
<rect x="484.8" y="79.3" width="4.2" height="8" rx="0.6" fill="#a8cce8" stroke="#4a80b8" stroke-width="0.6"/>
<path d="M481.5 92.5 h4.4 l-2.2 3z" fill="#aaa"/>
<rect x="491" y="90.5" width="7" height="7" fill="#fafafa" stroke="#8a8a8a" stroke-width="0.6"/><rect x="492.3" y="91.8" width="1.8" height="1.8" fill="none" stroke="#777" stroke-width="0.4"/><rect x="494.8" y="94.5" width="1.8" height="1.8" fill="none" stroke="#777" stroke-width="0.4"/>
<rect x="500.5" y="101.3" width="7" height="7" fill="#fff" stroke="#7a7a7a" stroke-width="0.6"/>
<rect x="541" y="229.3" width="10" height="0.8" fill="#bdbdbd"/>
<path d="M599 237 h3.3 a2.1 2.1 0 0 1 0 4.2 h-3" fill="none" stroke="#4a5a7a" stroke-width="1"/><path d="M598 237 l2 -1.6 v3.2z" fill="#4a5a7a"/>
<path d="M611.5 235.3 h8 l-3 3 v3 h-2 v-3z" fill="#3a8ad8"/>
<rect x="471" y="267.64" width="147.3" height="0.6" fill="#ececec"/>
<rect x="471" y="279.27" width="147.3" height="0.6" fill="#ececec"/>
<rect x="471" y="290.90" width="147.3" height="0.6" fill="#ececec"/>
<rect x="471" y="302.53" width="147.3" height="0.6" fill="#ececec"/>
<rect x="471" y="314.17" width="147.3" height="0.6" fill="#ececec"/>
<rect x="471" y="325.80" width="147.3" height="0.6" fill="#ececec"/>
<rect x="471" y="337.43" width="147.3" height="0.6" fill="#ececec"/>
<rect x="471" y="349.06" width="147.3" height="0.6" fill="#ececec"/>
<rect x="546.5" y="340.54" width="6.4" height="6.4" rx="1" fill="#fff" stroke="#666" stroke-width="0.6"/>
<rect x="471" y="360.69" width="147.3" height="0.6" fill="#ececec"/>
<rect x="471" y="372.31" width="147.3" height="0.6" fill="#ececec"/>
<rect x="471" y="383.94" width="147.3" height="0.6" fill="#ececec"/>
<rect x="546.5" y="375.43" width="6.4" height="6.4" rx="1" fill="#fff" stroke="#666" stroke-width="0.6"/>
<rect x="471" y="395.57" width="147.3" height="0.6" fill="#ececec"/>
<rect x="546.5" y="387.06" width="6.4" height="6.4" rx="1" fill="#fff" stroke="#666" stroke-width="0.6"/>
<rect x="471" y="407.20" width="147.3" height="0.6" fill="#ececec"/>
<path d="M472.5 400.28999999999996 l2.2 1.6 l-2.2 1.6z" fill="#999"/>
<rect x="471" y="418.83" width="147.3" height="0.6" fill="#ececec"/>
<rect x="471" y="430.46" width="147.3" height="0.6" fill="#ececec"/>
<rect x="471" y="442.09" width="147.3" height="0.6" fill="#ececec"/>
<rect x="544.3" y="244.8" width="0.6" height="196" fill="#e4e4e4"/>
<rect x="471" y="440.6" width="147.3" height="0.6" fill="#d8d8d8"/>
<rect x="628" y="58" width="4.5" height="4.5" fill="#4a7ac0"/><path d="M628.8 59 h3 M628.8 60.3 h3 M628.8 61.5 h3" stroke="#fff" stroke-width="0.5"/>
<circle cx="630.3" cy="116.8" r="2.2" fill="none" stroke="#3aa04a" stroke-width="1"/>
<rect x="628" y="149.5" width="4.8" height="6" fill="#c8a060"/>
<rect x="19" y="457.5" width="5.5" height="5.5" fill="#d8d8d8" stroke="#777" stroke-width="0.6"/><path d="M20 459 l1.5 1 l-1.5 1" stroke="#333" stroke-width="0.5" fill="none"/>
<path d="M58.98 459.12 a2.52 2.52 0 0 1 5.04 0z" fill="#8fbf3c"/><rect x="59.16" y="459.72" width="4.68" height="3.72" rx="0.6" fill="#8fbf3c"/><rect x="57.86" y="459.92" width="0.9" height="2.79" rx="0.4" fill="#8fbf3c"/><rect x="64.24" y="459.92" width="0.9" height="2.79" rx="0.4" fill="#8fbf3c"/><circle cx="60.37" cy="457.99" r="0.45" fill="#fff"/><circle cx="62.63" cy="457.99" r="0.45" fill="#fff"/>
<rect x="103.5" y="457.3" width="6" height="6" fill="#d8a850" stroke="#a07830" stroke-width="0.5"/><path d="M104.5 459 h4 M104.5 460.5 h4 M104.5 462 h4" stroke="#f4e0b0" stroke-width="0.5"/>
<rect x="152" y="457.5" width="5.5" height="5.5" fill="#e8d8b8" stroke="#a08050" stroke-width="0.5"/><rect x="153" y="456.8" width="3.5" height="1.5" fill="#4a8ad0"/>
<path d="M467 457.3 h5.5 v4 h-3.5 l-1.5 1.5 v-1.5 h-0.5z" fill="#a8a8a8"/>
<rect x="511" y="457.3" width="5.5" height="5.5" fill="#f0f0f0" stroke="#4a7ab0" stroke-width="0.6"/><path d="M512.5 459 l1.3 1 l-1.3 1" stroke="#4a7ab0" stroke-width="0.5" fill="none"/>
<rect x="571" y="457.8" width="5.5" height="5" fill="#4a7ab8"/><path d="M572 462 v-2 M573.5 462 v-3 M575 462 v-1.5" stroke="#cfe0f4" stroke-width="0.6"/>
<path d="M115 454.6 l3 2.4 l3 -2.4z" fill="#c8f0c0"/>
<rect x="6.5" y="467.5" width="6.5" height="6.5" fill="#c8c8c8" stroke="#9a9a9a" stroke-width="0.6"/>
<rect x="566" y="467" width="0.6" height="8.5" fill="#d0d0d0"/>
<rect x="592" y="467" width="0.6" height="8.5" fill="#d0d0d0"/>
<rect x="613" y="467" width="0.6" height="8.5" fill="#d0d0d0"/>
<rect x="624" y="467" width="0.6" height="8.5" fill="#d0d0d0"/>
<rect x="615.5" y="470.5" width="4" height="3.5" fill="#555"/><path d="M616.3 470.5 v-1.3 a1.2 1.2 0 0 1 2.4 0" fill="none" stroke="#555" stroke-width="0.6"/>
<rect x="627" y="468.5" width="4.5" height="6" fill="#c8c8c8" stroke="#999" stroke-width="0.4"/>
</svg>
<div class="t" style="left:77px;top:3.59px;font-size:7.3px;line-height:8.76px;color:#404040;">StateChange - [C:\Users\Neil\AndroidStudioProjects\StateChange] - [app] - ...\app\src\main\res\layout\activity_state_change.xml - Android Studio 1.0.1</div>
<div class="t" style="left:6.5px;top:16.95px;font-size:6.5px;line-height:7.8px;color:#1e1e1e;letter-spacing:-0.2px"><u>F</u>ile</div>
<div class="t" style="left:21.7px;top:16.95px;font-size:6.5px;line-height:7.8px;color:#1e1e1e;letter-spacing:-0.2px"><u>E</u>dit</div>
<div class="t" style="left:37.6px;top:16.95px;font-size:6.5px;line-height:7.8px;color:#1e1e1e;letter-spacing:-0.2px"><u>V</u>iew</div>
<div class="t" style="left:55.6px;top:16.95px;font-size:6.5px;line-height:7.8px;color:#1e1e1e;letter-spacing:-0.2px"><u>N</u>avigate</div>
<div class="t" style="left:84.7px;top:16.95px;font-size:6.5px;line-height:7.8px;color:#1e1e1e;letter-spacing:-0.2px"><u>C</u>ode</div>
<div class="t" style="left:104.5px;top:16.95px;font-size:6.5px;line-height:7.8px;color:#1e1e1e;letter-spacing:-0.2px">Analy<u>z</u>e</div>
<div class="t" style="left:130.5px;top:16.95px;font-size:6.5px;line-height:7.8px;color:#1e1e1e;letter-spacing:-0.2px"><u>R</u>efactor</div>
<div class="t" style="left:158px;top:16.95px;font-size:6.5px;line-height:7.8px;color:#1e1e1e;letter-spacing:-0.2px"><u>B</u>uild</div>
<div class="t" style="left:177px;top:16.95px;font-size:6.5px;line-height:7.8px;color:#1e1e1e;letter-spacing:-0.2px">R<u>u</u>n</div>
<div class="t" style="left:193px;top:16.95px;font-size:6.5px;line-height:7.8px;color:#1e1e1e;letter-spacing:-0.2px"><u>T</u>ools</div>
<div class="t" style="left:213px;top:16.95px;font-size:6.5px;line-height:7.8px;color:#1e1e1e;letter-spacing:-0.2px">VC<u>S</u></div>
<div class="t" style="left:229px;top:16.95px;font-size:6.5px;line-height:7.8px;color:#1e1e1e;letter-spacing:-0.2px"><u>W</u>indow</div>
<div class="t" style="left:257px;top:16.95px;font-size:6.5px;line-height:7.8px;color:#1e1e1e;letter-spacing:-0.2px"><u>H</u>elp</div>
<div class="t" style="left:191px;top:30.40px;font-size:5.7px;line-height:6.84px;color:#222;">app</div>
<div class="t" style="left:331.5px;top:28.48px;font-size:9px;line-height:10.8px;color:#3a8ad8;font-weight:bold">?</div>
<div class="t" style="left:17.5px;top:43.61px;font-size:5.8px;line-height:6.96px;color:#1a1a1a;font-weight:bold">StateChange</div>
<div class="t" style="left:67.5px;top:43.61px;font-size:5.8px;line-height:6.96px;color:#1a1a1a;font-weight:bold">app</div>
<div class="t" style="left:92.5px;top:43.61px;font-size:5.8px;line-height:6.96px;color:#1a1a1a;">src</div>
<div class="t" style="left:116.5px;top:43.61px;font-size:5.8px;line-height:6.96px;color:#1a1a1a;">main</div>
<div class="t" style="left:144.5px;top:43.61px;font-size:5.8px;line-height:6.96px;color:#1a1a1a;">res</div>
<div class="t" style="left:167.5px;top:43.61px;font-size:5.8px;line-height:6.96px;color:#1a1a1a;">layout</div>
<div class="t" style="left:198.5px;top:43.61px;font-size:5.8px;line-height:6.96px;color:#1a1a1a;">activity_state_change.xml</div>
<div class="t" style="left:9px;top:68.8px;font-size:5.5px;line-height:5.5px;color:#222;transform:translate(-50%,-50%) rotate(-90deg);">1: Project</div>
<div class="t" style="left:9px;top:110.2px;font-size:5.5px;line-height:5.5px;color:#333;transform:translate(-50%,-50%) rotate(-90deg);">2: Structure</div>
<div class="t" style="left:9px;top:371.5px;font-size:5.5px;line-height:5.5px;color:#333;transform:translate(-50%,-50%) rotate(-90deg);">2: Favorites</div>
<div class="t" style="left:9px;top:422.4px;font-size:5.5px;line-height:5.5px;color:#333;transform:translate(-50%,-50%) rotate(-90deg);">Build Variants</div>
<div class="t" style="left:28.7px;top:54.60px;font-size:5.7px;line-height:6.84px;color:#222;">Android</div>
<div class="t" style="left:34.2px;top:65.50px;font-size:5.7px;line-height:6.84px;color:#1a1a1a;font-weight:bold">app</div>
<div class="t" style="left:44px;top:75.22px;font-size:5.7px;line-height:6.84px;color:#222;">manifests</div>
<div class="t" style="left:44px;top:84.94px;font-size:5.7px;line-height:6.84px;color:#222;">java</div>
<div class="t" style="left:44px;top:94.66px;font-size:5.7px;line-height:6.84px;color:#222;">res</div>
<div class="t" style="left:54px;top:104.38px;font-size:5.7px;line-height:6.84px;color:#222;">drawable</div>
<div class="t" style="left:54px;top:114.10px;font-size:5.7px;line-height:6.84px;color:#222;">layout</div>
<div class="t" style="left:54px;top:133.54px;font-size:5.7px;line-height:6.84px;color:#222;">menu</div>
<div class="t" style="left:54px;top:143.26px;font-size:5.7px;line-height:6.84px;color:#222;">values</div>
<div class="t" style="left:64px;top:123.82px;font-size:5.7px;line-height:6.84px;color:#ffffff;">activity_state_change.xml</div>
<div class="t" style="left:35px;top:152.98px;font-size:5.7px;line-height:6.84px;color:#222;">Gradle Scripts</div>
<div class="t" style="left:181px;top:54.20px;font-size:5.7px;line-height:6.84px;color:#444;">StateChangeActivity.java</div>
<div class="t" style="left:270px;top:54.20px;font-size:5.7px;line-height:6.84px;color:#111;">activity_state_change.xml</div>
<div class="t" style="left:169.6px;top:68.20px;font-size:5.7px;line-height:6.84px;color:#333;">Palette</div>
<div class="t" style="left:180px;top:79.20px;font-size:5.7px;line-height:6.84px;color:#222;font-weight:bold">Layouts</div>
<div class="t" style="left:183.6px;top:88.92px;font-size:5.7px;line-height:6.84px;color:#222;">FrameLayout</div>
<div class="t" style="left:183.6px;top:98.64px;font-size:5.7px;line-height:6.84px;color:#222;">LinearLayout (Horizontal)</div>
<div class="t" style="left:183.6px;top:108.36px;font-size:5.7px;line-height:6.84px;color:#222;">LinearLayout (Vertical)</div>
<div class="t" style="left:183.6px;top:118.08px;font-size:5.7px;line-height:6.84px;color:#222;">TableLayout</div>
<div class="t" style="left:183.6px;top:127.80px;font-size:5.7px;line-height:6.84px;color:#222;">TableRow</div>
<div class="t" style="left:183.6px;top:137.52px;font-size:5.7px;line-height:6.84px;color:#222;">GridLayout</div>
<div class="t" style="left:183.6px;top:147.24px;font-size:5.7px;line-height:6.84px;color:#222;">RelativeLayout</div>
<div class="t" style="left:180px;top:156.96px;font-size:5.7px;line-height:6.84px;color:#222;font-weight:bold">Widgets</div>
<div class="t" style="left:174.9px;top:167.83px;font-size:4.6px;line-height:5.52px;color:#444;">Ab</div>
<div class="t" style="left:183.6px;top:166.68px;font-size:5.7px;line-height:6.84px;color:#222;">Plain TextView</div>
<div class="t" style="left:174.9px;top:177.55px;font-size:4.6px;line-height:5.52px;color:#444;">Ab</div>
<div class="t" style="left:183.6px;top:176.40px;font-size:5.7px;line-height:6.84px;color:#222;">Large Text</div>
<div class="t" style="left:174.9px;top:187.27px;font-size:4.6px;line-height:5.52px;color:#444;">Ab</div>
<div class="t" style="left:183.6px;top:186.12px;font-size:5.7px;line-height:6.84px;color:#222;">Medium Text</div>
<div class="t" style="left:174.9px;top:196.99px;font-size:4.6px;line-height:5.52px;color:#444;">Ab</div>
<div class="t" style="left:183.6px;top:195.84px;font-size:5.7px;line-height:6.84px;color:#222;">Small Text</div>
<div class="t" style="left:183.6px;top:205.56px;font-size:5.7px;line-height:6.84px;color:#222;">Button</div>
<div class="t" style="left:183.6px;top:215.28px;font-size:5.7px;line-height:6.84px;color:#222;">Small Button</div>
<div class="t" style="left:183.6px;top:225.00px;font-size:5.7px;line-height:6.84px;color:#222;">RadioButton</div>
<div class="t" style="left:183.6px;top:234.72px;font-size:5.7px;line-height:6.84px;color:#222;">CheckBox</div>
<div class="t" style="left:183.6px;top:244.44px;font-size:5.7px;line-height:6.84px;color:#222;">Switch</div>
<div class="t" style="left:183.6px;top:254.16px;font-size:5.7px;line-height:6.84px;color:#222;">ToggleButton</div>
<div class="t" style="left:183.6px;top:263.88px;font-size:5.7px;line-height:6.84px;color:#222;">ImageButton</div>
<div class="t" style="left:183.6px;top:273.60px;font-size:5.7px;line-height:6.84px;color:#222;">ImageView</div>
<div class="t" style="left:183.6px;top:283.32px;font-size:5.7px;line-height:6.84px;color:#222;">ProgressBar (Large)</div>
<div class="t" style="left:183.6px;top:293.04px;font-size:5.7px;line-height:6.84px;color:#222;">ProgressBar (Normal)</div>
<div class="t" style="left:183.6px;top:302.76px;font-size:5.7px;line-height:6.84px;color:#222;">ProgressBar (Small)</div>
<div class="t" style="left:183.6px;top:312.48px;font-size:5.7px;line-height:6.84px;color:#222;">ProgressBar (Horizontal)</div>
<div class="t" style="left:183.6px;top:322.20px;font-size:5.7px;line-height:6.84px;color:#222;">SeekBar</div>
<div class="t" style="left:183.6px;top:331.92px;font-size:5.7px;line-height:6.84px;color:#222;">RatingBar</div>
<div class="t" style="left:183.6px;top:341.64px;font-size:5.7px;line-height:6.84px;color:#222;">Spinner</div>
<div class="t" style="left:183.6px;top:351.36px;font-size:5.7px;line-height:6.84px;color:#222;">WebView</div>
<div class="t" style="left:180px;top:361.08px;font-size:5.7px;line-height:6.84px;color:#222;font-weight:bold">Text Fields</div>
<div class="t" style="left:183.6px;top:370.80px;font-size:5.7px;line-height:6.84px;color:#222;">Plain Text</div>
<div class="t" style="left:183.6px;top:380.52px;font-size:5.7px;line-height:6.84px;color:#222;">Person Name</div>
<div class="t" style="left:183.6px;top:390.24px;font-size:5.7px;line-height:6.84px;color:#222;">Password</div>
<div class="t" style="left:183.6px;top:399.96px;font-size:5.7px;line-height:6.84px;color:#222;">Password (Numeric)</div>
<div class="t" style="left:183.6px;top:409.68px;font-size:5.7px;line-height:6.84px;color:#222;">E-mail</div>
<div class="t" style="left:183.6px;top:419.40px;font-size:5.7px;line-height:6.84px;color:#222;">Phone</div>
<div class="t" style="left:183.6px;top:429.12px;font-size:5.7px;line-height:6.84px;color:#222;">Postal Address</div>
<div style="left:168.3px;top:437px;width:80px;height:3.6px;overflow:hidden"><svg width="80" height="10" style="position:absolute;left:0;top:0"><rect x="6" y="1.54" width="7" height="7.2" fill="#fff" stroke="#c8c890" stroke-width="0.6"/></svg><div class="t" style="position:absolute;left:15.3px;top:1.84px;font-size:5.7px;line-height:6.84px;color:#222">Multiline Text</div></div>
<div class="t" style="left:179.5px;top:443.80px;font-size:5.7px;line-height:6.84px;color:#222;">Design</div>
<div class="t" style="left:205.5px;top:443.80px;font-size:5.7px;line-height:6.84px;color:#333;">Text</div>
<div class="t" style="left:283px;top:68.90px;font-size:5.6px;line-height:6.72px;color:#222;letter-spacing:-0.1px">Nexus 4</div>
<div class="t" style="left:338.7px;top:68.99px;font-size:5.5px;line-height:6.6px;color:#1a1a1a;letter-spacing:-0.1px">AppTheme</div>
<div class="t" style="left:379.5px;top:68.99px;font-size:5.5px;line-height:6.6px;color:#222;letter-spacing:-0.05px">StateChange</div>
<div class="t" style="left:449.5px;top:68.90px;font-size:5.6px;line-height:6.72px;color:#222;">21</div>
<div class="t" style="left:419.8px;top:143.28px;font-size:5.3px;line-height:6.36px;color:#f0f0f0;">5:00</div>
<div class="t" style="left:290.8px;top:156.75px;font-size:5.55px;line-height:6.66px;color:#7a7a7a;-webkit-text-stroke-width:0.05px">Hello world!</div>
<div class="t" style="left:473.3px;top:68.50px;font-size:5.6px;line-height:6.72px;color:#3a3a3a;">Component Tree</div>
<div class="t" style="left:490.5px;top:80.19px;font-size:5.5px;line-height:6.6px;color:#222;">Device Screen</div>
<div class="t" style="left:499.5px;top:90.99px;font-size:5.5px;line-height:6.6px;color:#222;letter-spacing:-0.1px">RelativeLayout</div>
<div class="t" style="left:501px;top:102.45px;font-size:4.6px;line-height:5.52px;color:#444;">Ab</div>
<div class="t" style="left:509.5px;top:101.99px;font-size:5.5px;line-height:6.6px;color:#222;">TextView</div>
<div class="t" style="left:533.5px;top:101.99px;font-size:5.5px;line-height:6.6px;color:#a0a0a0;">- @string/hello_world</div>
<div class="t" style="left:472.5px;top:234.99px;font-size:5.5px;line-height:6.6px;color:#333;">Properties</div>
<div class="t" style="left:584px;top:233.75px;font-size:8.5px;line-height:10.2px;color:#3a8ad8;font-weight:bold">?</div>
<div class="t" style="left:480.7px;top:247.99px;font-size:5.5px;line-height:6.6px;color:#ffffff;font-weight:bold">layout:width</div>
<div class="t" style="left:546.3px;top:247.99px;font-size:5.5px;line-height:6.6px;color:#f4f4f4;">match_parent</div>
<div class="t" style="left:480.7px;top:259.62px;font-size:5.5px;line-height:6.6px;color:#2a4aa0;font-weight:bold">layout:height</div>
<div class="t" style="left:546.3px;top:259.62px;font-size:5.5px;line-height:6.6px;color:#222;">match_parent</div>
<div class="t" style="left:480.7px;top:271.25px;font-size:5.5px;line-height:6.6px;color:#222;font-weight:bold">style</div>
<div class="t" style="left:480.7px;top:282.88px;font-size:5.5px;line-height:6.6px;color:#222;">accessibilityLiveRegion</div>
<div class="t" style="left:480.7px;top:294.51px;font-size:5.5px;line-height:6.6px;color:#222;">alpha</div>
<div class="t" style="left:480.7px;top:306.14px;font-size:5.5px;line-height:6.6px;color:#222;font-weight:bold">background</div>
<div class="t" style="left:480.7px;top:317.77px;font-size:5.5px;line-height:6.6px;color:#222;">backgroundTint</div>
<div class="t" style="left:480.7px;top:329.40px;font-size:5.5px;line-height:6.6px;color:#222;">backgroundTintMode</div>
<div class="t" style="left:480.7px;top:341.03px;font-size:5.5px;line-height:6.6px;color:#222;">clickable</div>
<div class="t" style="left:480.7px;top:352.66px;font-size:5.5px;line-height:6.6px;color:#222;">contentDescription</div>
<div class="t" style="left:480.7px;top:364.29px;font-size:5.5px;line-height:6.6px;color:#222;">elevation</div>
<div class="t" style="left:480.7px;top:375.92px;font-size:5.5px;line-height:6.6px;color:#222;">focusable</div>
<div class="t" style="left:480.7px;top:387.55px;font-size:5.5px;line-height:6.6px;color:#222;">focusableInTouchMode</div>
<div class="t" style="left:480.7px;top:399.18px;font-size:5.5px;line-height:6.6px;color:#222;font-weight:bold">gravity</div>
<div class="t" style="left:546.3px;top:399.18px;font-size:5.5px;line-height:6.6px;color:#222;">[]</div>
<div class="t" style="left:480.7px;top:410.81px;font-size:5.5px;line-height:6.6px;color:#222;font-weight:bold">id</div>
<div class="t" style="left:480.7px;top:422.44px;font-size:5.5px;line-height:6.6px;color:#222;font-weight:bold">ignoreGravity</div>
<div class="t" style="left:480.7px;top:434.07px;font-size:5.5px;line-height:6.6px;color:#222;">importantForAccessibilit</div>
<div class="t" style="left:630.3px;top:83.8px;font-size:5.5px;line-height:5.5px;color:#222;transform:translate(-50%,-50%) rotate(90deg);">Maven Projects</div>
<div class="t" style="left:630.3px;top:130.5px;font-size:5.5px;line-height:5.5px;color:#222;transform:translate(-50%,-50%) rotate(90deg);">Gradle</div>
<div class="t" style="left:630.3px;top:172.5px;font-size:5.5px;line-height:5.5px;color:#222;transform:translate(-50%,-50%) rotate(90deg);">Commander</div>
<div class="t" style="left:26.5px;top:457.20px;font-size:5.7px;line-height:6.84px;color:#333;">Terminal</div>
<div class="t" style="left:67.3px;top:457.20px;font-size:5.7px;line-height:6.84px;color:#333;"><u>6</u>: Android</div>
<div class="t" style="left:111.5px;top:457.20px;font-size:5.7px;line-height:6.84px;color:#333;"><u>0</u>: Messages</div>
<div class="t" style="left:159.5px;top:457.20px;font-size:5.7px;line-height:6.84px;color:#333;">TODO</div>
<div class="t" style="left:474.5px;top:457.20px;font-size:5.7px;line-height:6.84px;color:#333;">Event Log</div>
<div class="t" style="left:518.5px;top:457.20px;font-size:5.7px;line-height:6.84px;color:#333;">Gradle Console</div>
<div class="t" style="left:578.5px;top:457.20px;font-size:5.7px;line-height:6.84px;color:#333;">Memory Monitor</div>
<div class="t" style="left:77.5px;top:445.90px;font-size:5.7px;line-height:6.84px;color:#222;">Gradle build finished in 1 min 10 sec</div>
<div class="t" style="left:17.3px;top:467.80px;font-size:5.7px;line-height:6.84px;color:#333;">Gradle build finished in 1 min 10 sec (a minute ago)</div>
<div class="t" style="left:577.5px;top:468.27px;font-size:5px;line-height:6.0px;color:#a8a8a8;">n/a</div>
<div class="t" style="left:599.5px;top:468.27px;font-size:5px;line-height:6.0px;color:#a8a8a8;">n/a</div>
</body></html>
